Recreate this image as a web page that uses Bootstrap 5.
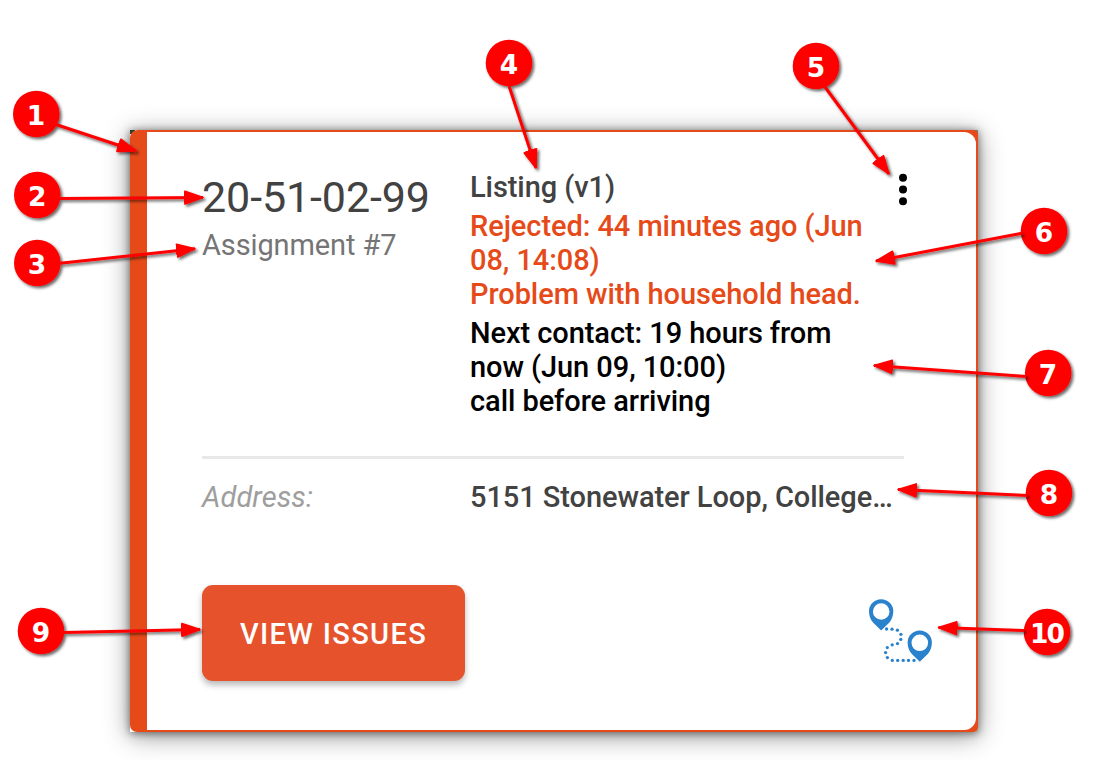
<!DOCTYPE html>
<html lang="en">
<head>
<meta charset="utf-8">
<meta name="viewport" content="width=device-width, initial-scale=1">
<title>Assignment card</title>
<link href="https://cdn.jsdelivr.net/npm/bootstrap@5.3.0/dist/css/bootstrap.min.css" rel="stylesheet">
<style>
  body { font-family: Roboto, sans-serif; background: #fff; width: 1100px; height: 760px; overflow: hidden; }
  .stage { padding: 130px 122px 0 130px; }
  .backing {
    background: linear-gradient(#24452c, #24452c) 0 0 / 5px 4px no-repeat, linear-gradient(#857a66, #857a66) 100% 0 / 5px 5px no-repeat,
      linear-gradient(#b5a584, #b5a584) 100% 100% / 5px 5px no-repeat;
    box-shadow: 0 1px 8px rgba(0,0,0,.5), 0 4px 24px rgba(0,0,0,.42);
  }
  .assignment {
    height: 602px; background: #e64a19; border: 0; border-radius: 8px 5px 5px 7px; padding: 2px 2px 2px 17px;
  }
  .assignment-body { background: #fff; border-radius: 0 12px 12px 0; padding: 38px 43px 0 55px; height: 598px; }
  .left-col { width: 268px; flex: none; }
  .entry { font-size: 29px; line-height: 34px; font-weight: 500; letter-spacing: -.07px; }
  .code { font-size: 43px; line-height: 50px; color: #424242; margin-top: 2px; letter-spacing: -.1px; }
  .assign-no { font-weight: 400; color: #757575; margin-top: 6px; letter-spacing: -.12px; }
  .dark-grey { color: #424242; }
  .issue { color: #e64a19; }
  .stack { gap: 5px; width: 400px; }
  .rule { height: 3px; background: #e8e8e8; margin: 38px 29px 21px 0; }
  .addr-label { font-weight: 400; color: #9e9e9e; letter-spacing: .1px; }
  .btn-issues {
    --bs-btn-bg: #e6522c; --bs-btn-color: #fff; --bs-btn-hover-bg: #d84a24; --bs-btn-hover-color: #fff;
    width: 263px; height: 96px; border: 0; border-radius: 11px; padding: 4px 0 0; font-size: 29px; font-weight: 500;
    letter-spacing: 1.35px; box-shadow: 0 4px 6px rgba(0,0,0,.28);
  }
  .actions { margin-top: 71px; }
  .more { margin-right: 3px; }
  .route { margin-top: 13px; }
  .notes { pointer-events: none; }
  .notes text { font: bold 26.5px "DejaVu Sans", sans-serif; fill: #fff; text-anchor: middle; }
  .notes .two-digit { letter-spacing: -2px; }
</style>
</head>
<body class="position-relative">
<main class="stage">
  <div class="backing">
  <article class="card assignment">
    <div class="assignment-body">
      <div class="d-flex">
        <div class="left-col">
          <div class="code">20-51-02-99</div>
          <div class="entry assign-no">Assignment #7</div>
        </div>
        <div class="d-flex flex-column stack">
          <div class="entry dark-grey">Listing (v1)</div>
          <div class="entry issue">Rejected: 44 minutes ago (Jun<br>08, 14:08)<br>Problem with household head.</div>
          <div class="entry text-black">Next contact: 19 hours from<br>now (Jun 09, 10:00)<br>call before arriving</div>
        </div>
        <svg class="more ms-auto flex-shrink-0" width="60" height="40" viewBox="870 170 60 40" aria-label="More"><circle cx="903" cy="177.7" r="4"/><circle cx="903" cy="189.4" r="4"/><circle cx="903" cy="201.2" r="4"/></svg>
      </div>
      <div class="rule"></div>
      <div class="d-flex entry">
        <div class="left-col addr-label fst-italic">Address:</div>
        <div class="dark-grey text-nowrap">5151 Stonewater Loop, College…</div>
      </div>
      <div class="d-flex justify-content-between actions">
        <button type="button" class="btn btn-issues">VIEW ISSUES</button>
        <svg class="route" width="64" height="66" viewBox="869 598 64 66" aria-label="Route">
          <g fill="#2a82cc" fill-rule="evenodd">
            <path id="pin" d="M881.200 630.500L873 622.500C870.300 619.500 869 615.500 869 611.300A12.150 12.150 0 0 1 893.300 611.300C893.300 615.500 892 619.500 889.400 622.500ZM881.200 603.200a8.300 8.300 0 1 0 0 16.600a8.300 8.300 0 1 0 0-16.600Z"/>
            <use href="#pin" x="38.600" y="31.300"/>
            <g><circle cx="886.600" cy="629" r="1.650"/><circle cx="892" cy="629.200" r="1.650"/><circle cx="897.400" cy="630.200" r="1.650"/><circle cx="900.900" cy="634.300" r="1.650"/><circle cx="900.800" cy="639.400" r="1.650"/><circle cx="897.500" cy="643.600" r="1.650"/><circle cx="892.200" cy="644.800" r="1.650"/><circle cx="887.300" cy="647.600" r="1.650"/><circle cx="885.600" cy="652.600" r="1.650"/><circle cx="887.400" cy="657.600" r="1.650"/><circle cx="892.300" cy="660.400" r="1.650"/><circle cx="897.700" cy="660.400" r="1.650"/><circle cx="903.200" cy="660.400" r="1.650"/><circle cx="908.500" cy="660.400" r="1.650"/><circle cx="914" cy="660.400" r="1.650"/></g>
          </g>
        </svg>
      </div>
    </div>
  </article>
  </div>
</main>
<!-- Numbered callouts lying over the card -->
<svg class="notes position-absolute top-0 start-0" width="1100" height="760" viewBox="0 0 1100 760">
  <defs>
    <filter id="sh" filterUnits="userSpaceOnUse" x="0" y="0" width="1100" height="760"><feDropShadow dx="2" dy="2" stdDeviation="1.800" flood-color="#000" flood-opacity=".6"/></filter>
    <marker id="tip" markerUnits="userSpaceOnUse" markerWidth="22" markerHeight="18" refX="19" refY="8" orient="auto"><path d="M1 1.500L19 8L1 14.500Q-.5 8 1 1.500Z" fill="#f00" stroke="#f00" stroke-width="1.500" stroke-linejoin="round"/></marker>
  </defs>
  <g filter="url(#sh)" fill="#f00">
    <circle cx="36.300" cy="114" r="23.300"/><circle cx="37.300" cy="195" r="23.300"/><circle cx="37.300" cy="263" r="23.300"/><circle cx="509" cy="63" r="23.300"/><circle cx="816" cy="66" r="23.300"/><circle cx="1044" cy="231" r="23.300"/><circle cx="1048.200" cy="373" r="23.300"/><circle cx="1049" cy="493" r="23.300"/><circle cx="41" cy="631" r="23.300"/><circle cx="1047" cy="632" r="23.300"/>
  </g>
  <g filter="url(#sh)" stroke="#f00" stroke-width="3" fill="none">
    <path d="M56 124.500L136 151" marker-end="url(#tip)"/><path d="M60 198.500L203 197.500" marker-end="url(#tip)"/><path d="M60 263.300L195 248.700" marker-end="url(#tip)"/><path d="M509 86L536 168" marker-end="url(#tip)"/><path d="M825 87L889 174" marker-end="url(#tip)"/><path d="M1022 233.300L876 261" marker-end="url(#tip)"/><path d="M1026 376.500L874 365.500" marker-end="url(#tip)"/><path d="M1027 495.500L898 489.500" marker-end="url(#tip)"/><path d="M64 632.500L200 629.500" marker-end="url(#tip)"/><path d="M1024 630.500L938.500 627.500" marker-end="url(#tip)"/>
  </g>
  <text x="36" y="124.500">1</text><text x="37.300" y="205.500">2</text><text x="37" y="273.500">3</text><text x="509" y="73.500">4</text><text x="816" y="76.500">5</text><text x="1044" y="241.500">6</text><text x="1048" y="383.500">7</text><text x="1049" y="503.500">8</text><text x="41" y="641.500">9</text><text class="two-digit" x="1046.500" y="642.500">10</text>
</svg>
<script src="https://cdn.jsdelivr.net/npm/bootstrap@5.3.0/dist/js/bootstrap.bundle.min.js"></script>
</body>
</html>
